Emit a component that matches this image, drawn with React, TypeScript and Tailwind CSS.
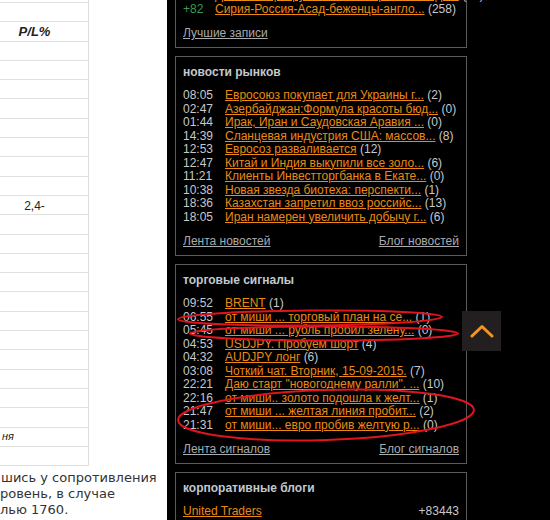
import React from "react";

type Row = { t: string; title: string; n: string };

const news: Row[] = [
  { t: "08:05", title: "Евросоюз покупает для Украины г...", n: "(2)" },
  { t: "02:47", title: "Азербайджан:Формула красоты бюд...", n: "(0)" },
  { t: "01:44", title: "Ирак, Иран и Саудовская Аравия ...", n: "(0)" },
  { t: "14:39", title: "Сланцевая индустрия США: массов...", n: "(8)" },
  { t: "12:53", title: "Евросоз разваливается", n: "(12)" },
  { t: "12:47", title: "Китай и Индия выкупили все золо...", n: "(6)" },
  { t: "11:21", title: "Клиенты Инвестторгбанка в Екате...", n: "(0)" },
  { t: "10:38", title: "Новая звезда биотеха: перспекти...", n: "(1)" },
  { t: "18:36", title: "Казахстан запретил ввоз российс...", n: "(13)" },
  { t: "18:05", title: "Иран намерен увеличить добычу г...", n: "(6)" },
];

const signals: Row[] = [
  { t: "09:52", title: "BRENT", n: "(1)" },
  { t: "06:55", title: "от миши ... торговый план на се...", n: "(1)" },
  { t: "05:45", title: "от миши ... рубль пробил зелену...", n: "(0)" },
  { t: "04:53", title: "USDJPY. Пробуем шорт", n: "(4)" },
  { t: "04:32", title: "AUDJPY лонг", n: "(6)" },
  { t: "03:08", title: "Чоткий чат. Вторник, 15-09-2015.", n: "(7)" },
  { t: "22:21", title: "Даю старт \"новогоднему ралли\". ...", n: "(10)" },
  { t: "22:16", title: "от миши.. золото подошла к желт...", n: "(1)" },
  { t: "21:47", title: "от миши ... желтая линия пробит...", n: "(2)" },
  { t: "21:31", title: "от миши... евро пробив желтую р...", n: "(0)" },
];

function FeedRow({ row, first = "w-[42px] text-[#c6c9cc]" }: { row: Row; first?: string }) {
  return (
    <div className="flex whitespace-nowrap">
      <span className={"shrink-0 " + first}>{row.t}</span>
      <a href="#" className="text-[#ea8a14] underline">
        {row.title}
      </a>
      <span className="text-[#c6c9cc]">&nbsp;{row.n}</span>
    </div>
  );
}

function Box({ title, rows, left, right }: { title: string; rows: Row[]; left: string; right: string }) {
  return (
    <div className="w-[292px] border border-[#5a5a5a] bg-black px-[7px] pt-[8px] pb-[7px]">
      <div className="font-bold leading-[14px] text-[#c3c9cf]">{title}</div>
      <div className="mt-[10px]">
        {rows.map((r) => (
          <FeedRow key={r.t + r.title} row={r} />
        ))}
      </div>
      <div className="mt-[10px] flex justify-between leading-[14px] text-[#a9abad]">
        <a href="#" className="underline">{left}</a>
        <a href="#" className="underline">{right}</a>
      </div>
    </div>
  );
}

export default function App() {
  // строки таблицы слева (видна только правая колонка)
  const cells: Record<number, React.ReactNode> = {
    1: <span className="font-bold italic text-[13px]">P/L%</span>,
    10: <span className="text-[12px]">2,4-</span>,
  };

  return (
    <div className="relative flex h-[520px] w-[550px] overflow-hidden bg-white">
      {/* левая часть: таблица и текст */}
      <div className="w-[167px] shrink-0 overflow-hidden bg-white font-['Liberation_Sans',Arial,sans-serif] text-[#222]">
        <div className="w-[89px] border-r border-[#dedede]">
          <div className="h-[3px] border-b border-[#e0e0e0]" />
          {Array.from({ length: 24 }).map((_, i) => (
            <div key={i} className="flex h-[19.3px] items-center border-b border-[#e0e0e0]">
              {i === 22 ? (
                <span className="pl-[2px] text-[11px] italic">ня</span>
              ) : (
                <div className="w-[69px] text-center">{cells[i]}</div>
              )}
            </div>
          ))}
        </div>
        <div className="mt-[4px] whitespace-nowrap font-['DejaVu_Sans',Verdana,sans-serif] text-[13px] leading-[16px] text-[#333]">
          <div className="pl-[1px]">шись у сопротивления</div>
          <div>ровень, в случае</div>
          <div>лью 1760.</div>
        </div>
      </div>

      {/* правая тёмная колонка */}
      <div className="flex flex-1 flex-col gap-[8px] bg-black pl-[8px] font-['Liberation_Sans',Arial,sans-serif] text-[12px] leading-[13.5px]">
        <div className="mt-[-12px] w-[292px] border border-[#5a5a5a] bg-black px-[7px] pb-[7px]">
          <FeedRow
            row={{ t: "+95", title: "Девальвация рубля: кто выиграет от паде...", n: "(47)" }}
            first="w-[32px] text-[#3c9a52]"
          />
          <FeedRow
            row={{ t: "+82", title: "Сирия-Россия-Асад-беженцы-англо...", n: "(258)" }}
            first="w-[32px] text-[#3c9a52]"
          />
          <div className="mt-[10px] leading-[14px] text-[#a9abad]">
            <a href="#" className="underline">Лучшие записи</a>
          </div>
        </div>

        <Box title="новости рынков" rows={news} left="Лента новостей" right="Блог новостей" />
        <Box title="торговые сигналы" rows={signals} left="Лента сигналов" right="Блог сигналов" />

        <div className="w-[292px] border border-[#5a5a5a] bg-black px-[7px] pt-[8px] pb-[7px]">
          <div className="font-bold leading-[14px] text-[#c3c9cf]">корпоративные блоги</div>
          <div className="mt-[10px] flex justify-between">
            <a href="#" className="text-[#ea8a14] underline">United Traders</a>
            <span className="text-[#c6c9cc]">+83443</span>
          </div>
        </div>
      </div>

      {/* кнопка "наверх" */}
      <button className="absolute left-[462px] top-[311px] flex h-[40px] w-[39px] items-center justify-center bg-[#231f20]">
        <svg width="24" height="14" viewBox="0 0 24 14">
          <polyline
            points="2,12 12,2.5 22,12"
            fill="none"
            stroke="#f7941d"
            strokeWidth="3"
            strokeLinecap="round"
            strokeLinejoin="round"
          />
        </svg>
      </button>

      {/* красные пометки от руки */}
      <svg className="pointer-events-none absolute left-0 top-0" width="550" height="520">
        <g fill="none" stroke="#e0141e" strokeWidth="2">
          <ellipse cx="310" cy="318" rx="132" ry="7.5" transform="rotate(-0.5 310 318)" />
          <ellipse cx="324" cy="333.5" rx="134" ry="7" />
          <ellipse cx="326" cy="415" rx="148" ry="25" transform="rotate(-2 326 415)" />
        </g>
      </svg>
    </div>
  );
}
